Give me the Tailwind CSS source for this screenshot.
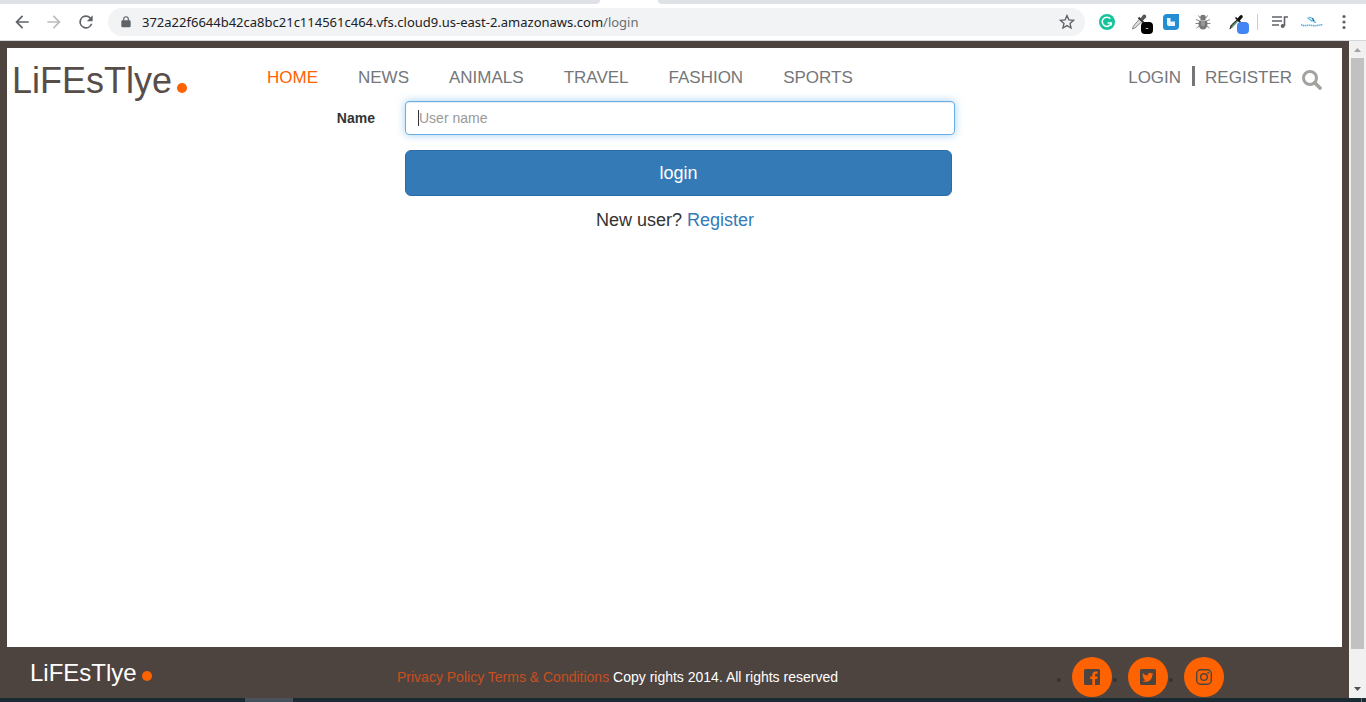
<!DOCTYPE html>
<html lang="en">
<head>
<meta charset="utf-8">
<meta name="viewport" content="width=device-width, initial-scale=1">
<title>LiFEsTlye</title>
<script src="https://cdn.jsdelivr.net/npm/@tailwindcss/browser@4"></script>
</head>
<body class="flex h-screen flex-col overflow-hidden bg-white font-['Liberation_Sans',Arial,sans-serif] text-[#333]">

<!-- Browser tab strip -->
<div class="flex h-1 shrink-0 bg-white">
  <div class="w-[600px] rounded-br bg-[#dee1e6]"></div>
  <div class="w-[58px]"></div>
  <div class="flex-1 rounded-bl bg-[#dee1e6]"></div>
</div>

<!-- Browser toolbar -->
<div class="flex h-[37px] shrink-0 items-center border-b border-[#d5d7da] pr-3.5 pl-2 text-[#5f6368]">
  <button aria-label="Back" class="w-7"><svg class="mx-auto size-5" viewBox="0 0 24 24" fill="currentColor"><path d="M20 11H7.8l5.6-5.6L12 4l-8 8 8 8 1.4-1.4L7.8 13H20z"/></svg></button>
  <button aria-label="Forward" class="ml-1 w-7 text-[#babcbe]"><svg class="mx-auto size-5" viewBox="0 0 24 24" fill="currentColor"><path d="M4 11h12.2l-5.6-5.6L12 4l8 8-8 8-1.4-1.4 5.6-5.6H4z"/></svg></button>
  <button aria-label="Reload" class="ml-1 w-7"><svg class="mx-auto size-5" viewBox="0 0 24 24" fill="currentColor"><path d="M17.65 6.35A8 8 0 1 0 19.73 14h-2.08A6 6 0 1 1 12 6c1.66 0 3.14.69 4.22 1.78L13 11h7V4z"/></svg></button>
  <div class="ml-2 flex h-7 flex-1 items-center rounded-full bg-[#f1f3f4] px-2.5">
    <svg class="ml-px h-3.5 w-3.5" viewBox="0 0 24 24" fill="currentColor"><path d="M18 9h-1V7A5 5 0 0 0 7 7v2H6a2 2 0 0 0-2 2v8a2 2 0 0 0 2 2h12a2 2 0 0 0 2-2v-8a2 2 0 0 0-2-2zM9 9V7a3 3 0 0 1 6 0v2z"/></svg>
    <p class="ml-[9px] flex-1 pt-0.5 font-['Noto_Sans',sans-serif] text-[13px] whitespace-nowrap text-[#202124]">372a22f6644b42ca8bc21c114561c464.vfs.cloud9.us-east-2.amazonaws.com<span class="text-[#6b6f73]">/login</span></p>
    <button aria-label="Bookmark"><svg class="size-4" viewBox="0 0 24 24" fill="none" stroke="currentColor" stroke-width="2"><path d="M12 2.300l2.800 6.500 7.100.6-5.400 4.700 1.600 6.900L12 17.400 5.900 21l1.600-6.900L2.100 9.400l7.100-.6z"/></svg></button>
  </div>
  <div class="ml-[14px] flex items-center gap-4">
    <svg class="size-4" viewBox="0 0 16 16"><circle cx="8" cy="8" r="8" fill="#15c39a"/><path d="M11.400 4.800A4.600 4.600 0 1 0 12.300 9H8.600m3.700 0v2.600" fill="none" stroke="#fff" stroke-width="1.500"/></svg>
    <span class="relative size-4">
      <svg class="size-4" viewBox="0 0 16 16"><path d="M8.500 5l2.500 2.500-7 6.500-2.500 1 .8-2.800z" fill="#ddd" stroke="#888"/><path d="M7.500 3.500l5 5" stroke="#333" stroke-width="1.800"/><path d="M9.500 4.500L12 1c1.500-1.500 4 .5 3 2.500L11.500 7z" fill="#555"/></svg>
      <span class="absolute top-2 left-2.5 flex size-3 items-center justify-center rounded-sm bg-black text-[9px] leading-none text-white">-</span>
    </span>
    <svg class="size-4" viewBox="0 0 16 16"><path d="M4 0h12v12a4 4 0 0 1-4 4H3a3 3 0 0 1-3-3V4a4 4 0 0 1 4-4z" fill="#238ed2"/><path d="M4 4h3.500v3.500H12V12H6a2 2 0 0 1-2-2z" fill="#e6f5ff"/></svg>
    <svg class="size-4" viewBox="0 0 16 16"><path d="M5 4L3.500 1.500M11 4l1.500-2.500M4.500 7L1 5.500M11.500 7L15 5.500M4 9.500H.5M12 9.500h3.500M4.500 12l-3 2M11.500 12l3 2" stroke="#888" fill="none"/><circle cx="8" cy="3.500" r="2.800" fill="#777"/><ellipse cx="8" cy="10" rx="4.500" ry="5.500" fill="#777"/><path d="M4.500 6.500h7" stroke="#ddd" stroke-width=".7"/><ellipse cx="8" cy="9.500" rx="2" ry="3" fill="#999"/></svg>
    <span class="relative ml-0.5 size-4">
      <svg class="size-4" viewBox="0 0 16 16"><path d="M.5 15.500l1-4 7-6.500 1.500 1.500-6.500 7z" fill="#5b8a67"/><path d="M1 15l1.500-4L9 5" stroke="#222" fill="none"/><path d="M6.500 3.500l5 5" stroke="#111" stroke-width="1.600"/><path d="M8 5l3-3.500c1.500-1.500 3.500.5 2.500 2L10.500 7z" fill="#111"/></svg>
      <span class="absolute top-2 left-2 size-3 rounded-sm bg-[#4285f4]"></span>
    </span>
  </div>
  <div class="ml-3 h-4 w-px bg-[#ccc]"></div>
  <svg class="ml-[14px] h-4 w-4" viewBox="0 0 16 16" fill="none" stroke="currentColor" stroke-width="1.600"><path d="M0 3h10M0 7h10M0 11h7M12.500 12V3H16"/><circle cx="10.700" cy="12" r="2" fill="currentColor" stroke="none"/></svg>
  <svg class="ml-[13px] h-4 w-[22px]" viewBox="0 0 22 16" fill="none"><path d="M6.500 3.500l4 3.500 2-1 2 3M8 3l5 2M12 7.500l3 1" stroke="#5bbbe5" stroke-width="1.200"/><path d="M11 4l2 3" stroke="#28577e"/><path d="M0 10.500q2 1.500 5 1t6 0 5 0 6-1" stroke="#67b3dc" stroke-width="1.600" stroke-dasharray="1.500 .5"/></svg>
  <button aria-label="Menu" class="ml-[13px]"><svg class="h-4 w-4" viewBox="0 0 16 16" fill="currentColor"><circle cx="8" cy="2.500" r="1.600"/><circle cx="8" cy="8" r="1.600"/><circle cx="8" cy="13.500" r="1.600"/></svg></button>
</div>

<!-- Page and scroll bar -->
<div class="flex min-h-0 flex-1">
  <div class="flex flex-1 flex-col bg-[#4e443f]">
    <div class="mx-[7px] mt-[7px] flex-1 bg-white">
      <header class="flex h-[53px] items-center pr-5 pl-[5px] text-[17px] leading-6 text-[#74767a]">
        <a href="#" class="flex w-[255px] items-baseline gap-[5px] pt-3 text-4xl text-[#574e49]">LiFEsTlye<span class="size-2.5 rounded-full bg-[#ff6200]"></span></a>
        <nav class="flex flex-1 gap-10 pt-1.5">
          <a href="#" class="text-[#ff6200]">HOME</a>
          <a href="#">NEWS</a>
          <a href="#">ANIMALS</a>
          <a href="#">TRAVEL</a>
          <a href="#">FASHION</a>
          <a href="#">SPORTS</a>
        </nav>
        <div class="flex items-center pt-1.5">
          <a href="#">LOGIN</a>
          <span class="mr-2.5 mb-1 ml-[11px] h-5 w-[3px] bg-[#74767a]"></span>
          <a href="#">REGISTER</a>
          <button aria-label="Search" class="ml-2.5 pt-1"><svg class="size-5" viewBox="0 0 20 20" fill="none" stroke="#a3a29e"><circle cx="8" cy="8" r="6.500" stroke-width="3"/><path d="M12.800 12.800l5.200 5.200" stroke-width="3.600" stroke-linecap="round"/></svg></button>
        </div>
      </header>
      <form class="grid grid-cols-[368fr_550fr_357fr] gap-x-[30px]">
        <label for="username" class="pt-[7px] text-right text-sm font-bold">Name</label>
        <div>
          <div class="relative">
            <input id="username" type="text" placeholder="User name" class="block h-[34px] w-full rounded border border-[#66afe9] bg-white px-[13px] text-sm caret-transparent shadow-[inset_0_1px_1px_rgba(0,0,0,.075),0_0_8px_rgba(102,175,233,.6)] outline-none placeholder:text-[#999]">
            <span class="absolute top-[9px] left-[13px] h-4 w-px bg-[#333]"></span>
          </div>
          <div class="mt-[15px] pr-[3px]">
            <button type="button" class="h-[46px] w-full rounded-md border border-[#2e6da4] bg-[#337ab7] text-lg text-white">login</button>
          </div>
          <p class="mt-2.5 pr-2.5 text-center text-lg">New user? <a href="#" class="text-[#337ab7]">Register</a></p>
        </div>
      </form>
    </div>
    <footer class="flex h-[51px] items-center pl-[30px]">
      <a href="#" class="flex w-[367px] items-baseline gap-[5px] text-2xl text-white">LiFEsTlye<span class="size-2.5 rounded-full bg-[#ff6200]"></span></a>
      <p class="flex-1 pt-2 text-sm text-white"><a href="#" class="text-[#c84f1d]">Privacy Policy</a> <a href="#" class="text-[#c84f1d]">Terms &amp; Conditions</a> Copy rights 2014. All rights reserved</p>
      <ul class="flex items-center pt-2 pr-[125px] text-[#4e443f]">
        <li class="flex items-center"><span class="mt-1.5 mr-[11px] size-1 rounded-full bg-[#333]"></span><a href="#" aria-label="Facebook" class="flex size-10 items-center justify-center rounded-full bg-[#ff6200]"><svg class="size-4" viewBox="0 0 16 16" fill="currentColor"><path d="M1.500 0h13A1.500 1.500 0 0 1 16 1.500v13a1.500 1.500 0 0 1-1.500 1.500H11v-6h2.200l.4-2.500H11V6c0-.8.4-1.200 1.300-1.200h1.400V2.500l-2-.1C9.500 2.400 8.300 3.700 8.300 5.700v1.800H6.200V10h2.100v6H1.500A1.500 1.500 0 0 1 0 14.500v-13A1.500 1.500 0 0 1 1.500 0z"/></svg></a></li>
        <li class="flex items-center"><span class="mt-1.5 mr-[11px] ml-px size-1 rounded-full bg-[#333]"></span><a href="#" aria-label="Twitter" class="flex size-10 items-center justify-center rounded-full bg-[#ff6200]"><svg class="size-4" viewBox="0 0 16 16"><rect width="16" height="16" rx="1.500" fill="#4e443f"/><path d="M13.500 4.700l-1.300.4 1-1.300-1.500.6A2.400 2.400 0 0 0 7.700 6.500C5.700 6.400 4 5.500 2.900 4c-.7 1.200-.3 2.500.7 3.200l-1-.3c0 1.100.8 2 1.900 2.300l-1.100.1c.3.900 1.200 1.600 2.200 1.600-1 .8-2.100 1.100-3.400 1 5 2.700 10.200-.5 10.100-6.100z" fill="#ff6200"/></svg></a></li>
        <li class="flex items-center"><span class="mt-1.5 mr-[11px] ml-px size-1 rounded-full bg-[#333]"></span><a href="#" aria-label="Instagram" class="flex size-10 items-center justify-center rounded-full bg-[#ff6200]"><svg class="size-4" viewBox="0 0 16 16" fill="none" stroke="currentColor" stroke-width="1.400"><rect x=".7" y=".7" width="14.600" height="14.600" rx="4"/><circle cx="8" cy="8" r="3.300"/><circle cx="12.200" cy="3.700" r="1" fill="currentColor" stroke="none"/></svg></a></li>
      </ul>
    </footer>
  </div>
  <div class="flex w-[17px] shrink-0 flex-col items-center bg-[#f1f1f1]">
    <svg class="h-[17px] w-[17px]" viewBox="0 0 17 17"><path d="M5 11l3.500-4L12 11z" fill="#a3a3a3"/></svg>
    <div class="w-[13px] flex-1 bg-[#c1c1c1]"></div>
    <svg class="mt-8 h-[17px] w-[17px]" viewBox="0 0 17 17"><path d="M5 6l3.500 4L12 6z" fill="#505050"/></svg>
  </div>
</div>

<!-- Task bar edge -->
<div class="flex h-1 shrink-0 bg-[#1b2a33]">
  <div class="ml-[245px] w-12 bg-[#47525b]"></div>
  <div class="mr-1 ml-auto w-px bg-[#6b7278]"></div>
</div>
</body>
</html>
